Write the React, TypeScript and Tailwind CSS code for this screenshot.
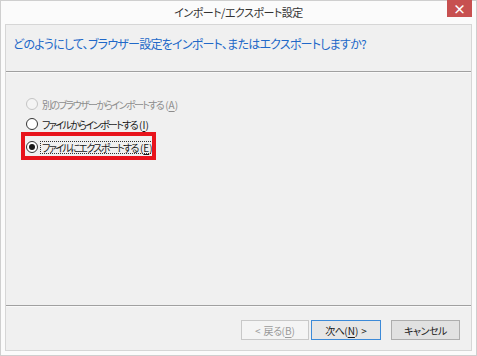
import { useState } from 'react';

const jp = "[font-family:'Noto_Sans_CJK_JP','Noto_Sans',sans-serif] [font-feature-settings:'palt']";

type Option = { id: string; label: string; key: string; disabled?: boolean };

const options: Option[] = [
  { id: 'browser', label: '別のブラウザーからインポートする', key: 'A', disabled: true },
  { id: 'import', label: 'ファイルからインポートする', key: 'I' },
  { id: 'export', label: 'ファイルにエクスポートする', key: 'E' },
];

function Radio({ checked, disabled }: { checked: boolean; disabled?: boolean }) {
  return (
    <span
      className={`flex h-[12px] w-[12px] shrink-0 items-center justify-center rounded-full border ${
        disabled ? 'border-[#c4c4c4] bg-[#f4f4f4]' : 'border-[#333333] bg-white'
      }`}
    >
      {checked && <span className="h-[6px] w-[6px] rounded-full bg-[#1a1a1a]" />}
    </span>
  );
}

export default function App() {
  const [selected, setSelected] = useState('export');

  return (
    <div className={`flex h-[356px] w-[477px] flex-col border border-[#cfcfcf] bg-[#fbfbfb] ${jp}`}>
      {/* Title bar */}
      <div className="relative flex h-[23px] shrink-0 items-center justify-center">
        <span className="text-[11px] tracking-[-0.5px] text-[#333333]">インポート/エクスポート設定</span>
        <button className="absolute right-[4px] top-[-1px] flex h-[17px] w-[25px] items-center justify-center bg-[#c75050] text-[13px] font-bold leading-none text-white">
          ×
        </button>
      </div>

      {/* Panel */}
      <div className="mx-[4px] mb-[4px] flex flex-1 flex-col border border-[#d6d6d6] bg-[#f0f0f0]">
        {/* Header */}
        <div className="h-[46px] shrink-0 pl-[7px] pt-[10px]">
          <p className="text-[12px] tracking-[-0.75px] text-[#2168c8]">
            どのようにして、ブラウザー設定をインポート、またはエクスポートしますか?
          </p>
        </div>
        <div className="h-px shrink-0 bg-[#a0a0a0]" />
        <div className="h-px shrink-0 bg-white/60" />

        {/* Options */}
        <div className="flex flex-1 flex-col pl-[20px] pt-[21px]">
          {options.map((o, i) => {
            const checked = selected === o.id;
            const focused = o.id === 'export';
            return (
              <label
                key={o.id}
                onClick={() => !o.disabled && setSelected(o.id)}
                className={`relative flex h-[20px] items-center gap-[3px] text-[10px] ${i === 2 ? 'mt-[3px]' : ''} ${
                  o.disabled ? 'text-[#8d8d8d]' : 'text-[#1a1a1a]'
                }`}
              >
                <Radio checked={checked} disabled={o.disabled} />
                <span
                  className={`px-px leading-[11px] ${focused ? 'outline-1 outline-dotted outline-[#333333]' : ''}`}
                >
                  <span className="tracking-[-1.6px]">{o.label}</span>
                  <span className="ml-[2px]">
                    (<span className="underline underline-offset-2">{o.key}</span>)
                  </span>
                </span>
                {focused && (
                  <span className="pointer-events-none absolute left-[-5px] top-[-5px] h-[28px] w-[135px] border-[4px] border-[#e8141c]" />
                )}
              </label>
            );
          })}
        </div>

        {/* Footer */}
        <div className="h-px shrink-0 bg-[#a0a0a0]" />
        <div className="h-px shrink-0 bg-white/60" />
        <div className="flex h-[43px] shrink-0 items-start justify-end pr-[11px] pt-[13px] text-[10px]">
          <button
            disabled
            className="flex h-[20px] w-[68px] items-center justify-center gap-[3px] border border-[#c8c8c8] bg-[#f4f4f4] text-[#9a9a9a]"
          >
            <span>&lt;</span>
            <span>
              <span className="tracking-[-0.5px]">戻る</span>(<span className="underline underline-offset-2">B</span>)
            </span>
          </button>
          <button className="ml-[2px] flex h-[20px] w-[70px] items-center justify-center gap-[3px] border border-[#3c8ad8] bg-[#e6e6e6] text-[#1a1a1a]">
            <span>
              <span className="tracking-[-0.5px]">次へ</span>(<span className="underline underline-offset-2">N</span>)
            </span>
            <span>&gt;</span>
          </button>
          <button className="ml-[10px] flex h-[20px] w-[69px] items-center justify-center border border-[#adadad] bg-[#e1e1e1] tracking-[-0.5px] text-[#1a1a1a]">
            キャンセル
          </button>
        </div>
      </div>
    </div>
  );
}
